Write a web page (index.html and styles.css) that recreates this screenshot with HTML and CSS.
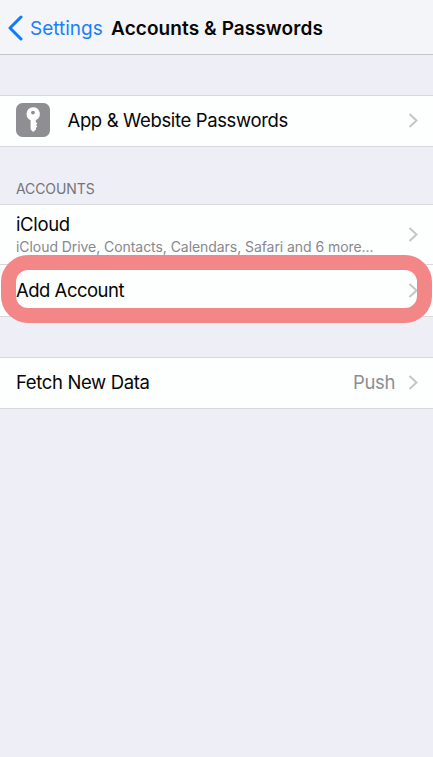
FILE: index.html
```
<!DOCTYPE html>
<html lang="en">
<head>
<meta charset="utf-8">
<title>Accounts &amp; Passwords</title>
<link rel="stylesheet" href="styles.css">
</head>
<body>
<header class="navbar">
  <a class="back">
    <svg class="back-icon" width="15" height="26" viewBox="0 0 15 26"><path d="M13 2 2 13l11 11"/></svg>
    <span class="back-label">Settings</span>
  </a>
  <h1 class="title">Accounts &amp; Passwords</h1>
</header>
<main>
  <section class="group">
    <div class="row">
      <svg class="key-icon" width="35" height="35" viewBox="0 0 35 35">
        <rect width="34" height="34" rx="6.5" fill="#8e8e93"/>
        <path fill="#fff" fill-rule="evenodd" d="M17 4.2a6.8 6.8 0 0 1 2.8 13V19l1.5 1.4-1.3 1.5 1.3 1.5-1.3 1.4v1.8L17.2 29l-2.6-2.5v-9.3A6.8 6.8 0 0 1 17 4.2Zm0 3.5a1.9 1.9 0 1 0 0 3.8 1.9 1.9 0 0 0 0-3.8Z"/>
      </svg>
      <span class="label">App &amp; Website Passwords</span>
      <svg class="chevron" width="11" height="16" viewBox="0 0 11 16"><path d="m1.5 1 7 6.5-7 6.5"/></svg>
    </div>
  </section>
  <h2 class="section-title">ACCOUNTS</h2>
  <section class="group accounts">
    <div class="row row-account">
      <div class="account">
        <span class="label">iCloud</span>
        <span class="detail">iCloud Drive, Contacts, Calendars, Safari and 6 more...</span>
      </div>
      <svg class="chevron" width="11" height="16" viewBox="0 0 11 16"><path d="m1.5 1 7 6.5-7 6.5"/></svg>
    </div>
    <div class="row row-add">
      <span class="label label-add">Add Account</span>
      <svg class="chevron" width="11" height="16" viewBox="0 0 11 16"><path d="m1.5 1 7 6.5-7 6.5"/></svg>
    </div>
    <div class="highlight"></div>
  </section>
  <section class="group">
    <div class="row">
      <span class="label">Fetch New Data</span>
      <span class="value">Push</span>
      <svg class="chevron" width="11" height="16" viewBox="0 0 11 16"><path d="m1.5 1 7 6.5-7 6.5"/></svg>
    </div>
  </section>
</main>
</body>
</html>
```
FILE: styles.css
```
* { box-sizing: border-box; }
body {
  margin: 0;
  min-height: 757px;
  background: #eeeef6;
  color: #060606;
  font-family: Inter, "Liberation Sans", sans-serif;
  font-size: 18.5px;
  line-height: 24px;
  white-space: nowrap;
}
svg { display: block; flex: none; }
.navbar {
  display: flex;
  align-items: center;
  height: 55px;
  padding: 3px 0 0 8px;
  background: #f4f5f8;
  border-bottom: 1px solid #c6c6cc;
}
.back { display: flex; align-items: center; width: 103px; color: #1a80f8; }
.back-icon { margin: -1px 7px 0 0; fill: none; stroke: #0f7bf7; stroke-width: 3; stroke-linecap: round; stroke-linejoin: round; }
.back-label { font-size: 19px; }
.title { margin: 0; font-size: 19px; font-weight: 600; letter-spacing: 0.09px; }
.group {
  position: relative;
  margin-top: 40px;
  background: #fdfefe;
  border-top: 1px solid #d8d8dd;
  border-bottom: 1px solid #d8d8dd;
}
.row { display: flex; align-items: center; height: 50px; padding: 0 14px 0 16px; }
.label, .value { margin-top: -1px; margin-bottom: 1px; letter-spacing: -0.36px; }
.label-add { letter-spacing: -0.5px; }
.key-icon { margin: -1px 17px 0 -0.5px; }
.chevron { margin-left: auto; fill: none; stroke: #c5c5ca; stroke-width: 2; }
.section-title {
  margin: 32px 0 0 16px;
  color: #73737a;
  font-size: 14px;
  font-weight: 400;
  letter-spacing: -0.1px;
  line-height: 20px;
}
.accounts { margin-top: 5px; }
.row-account { height: 60px; border-bottom: 1px solid #d8d8dd; }
.account { display: flex; flex-direction: column; padding-top: 1px; }
.detail { color: #88888c; font-size: 14px; letter-spacing: -0.06px; line-height: 20px; }
.row-add { height: 51px; }
.highlight {
  position: absolute;
  top: 50px;
  left: 1px;
  right: 1px;
  height: 68px;
  border: 15px solid #f38787;
  border-radius: 27px;
}
.value { margin-left: auto; color: #8e8e93; }
.value + .chevron { margin-left: 13px; }
```
